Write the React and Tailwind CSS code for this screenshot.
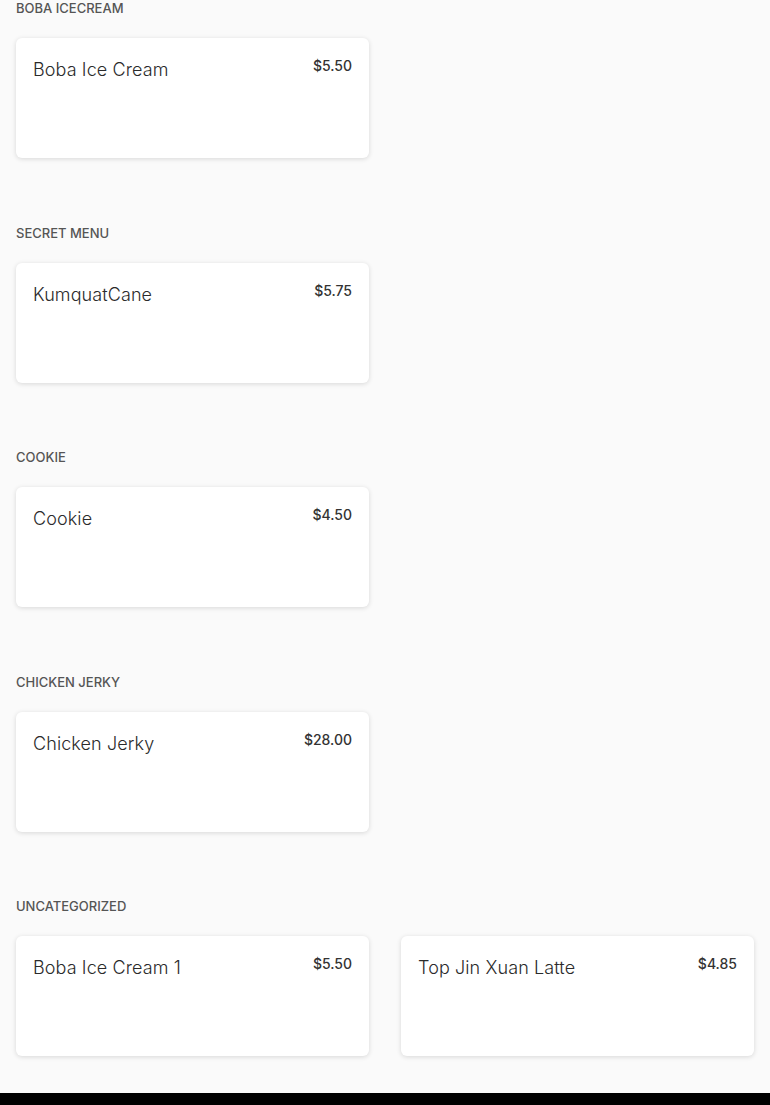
import React from 'react'

const sections = [
  { title: 'Boba Icecream', items: [{ name: 'Boba Ice Cream', price: '$5.50' }] },
  { title: 'Secret Menu', items: [{ name: 'KumquatCane', price: '$5.75' }] },
  { title: 'Cookie', items: [{ name: 'Cookie', price: '$4.50' }] },
  { title: 'Chicken Jerky', items: [{ name: 'Chicken Jerky', price: '$28.00' }] },
  {
    title: 'Uncategorized',
    items: [
      { name: 'Boba Ice Cream 1', price: '$5.50' },
      { name: 'Top Jin Xuan Latte', price: '$4.85' },
    ],
  },
]

function ItemCard({ item }) {
  return (
    <div className="h-[120px] bg-white rounded-md shadow-[0_1px_5px_rgba(0,0,0,0.14)] px-[17px] pt-[18px] flex items-start justify-between">
      <div className="mt-[2px] text-[18px] leading-6 text-[#2b2b2b] font-light tracking-[0.1px]">{item.name}</div>
      <div className="text-[14px] leading-5 font-medium text-[#333]">{item.price}</div>
    </div>
  )
}

export default function App() {
  return (
    <div className="min-h-[1105px] bg-[#fafafa] flex flex-col" style={{ fontFamily: 'Inter, "Open Sans", sans-serif' }}>
      <div className="px-4 flex-1">
        {sections.map((s, i) => (
          <div key={s.title} className={i === 0 ? '' : 'mt-[66.5px]'}>
            <h2 className="h-4 leading-4 text-[13px] font-medium uppercase text-[#555]">{s.title}</h2>
            <div className="mt-[22px] grid grid-cols-2 gap-8">
              {s.items.map(item => (
                <ItemCard key={item.name} item={item} />
              ))}
            </div>
          </div>
        ))}
      </div>
      <div className="h-3 bg-black" />
    </div>
  )
}
